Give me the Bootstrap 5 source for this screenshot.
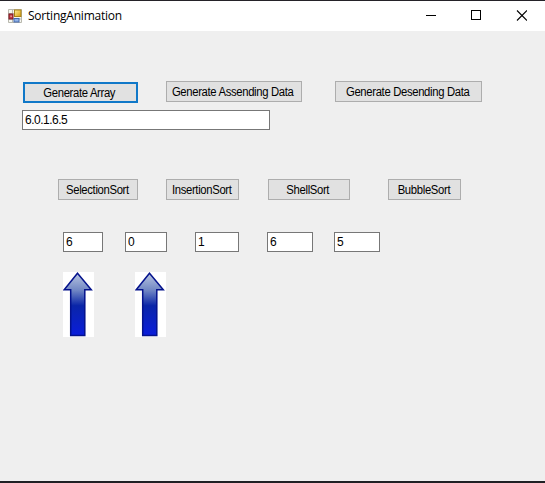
<!DOCTYPE html>
<html lang="en">
<head>
<meta charset="utf-8">
<title>SortingAnimation</title>
<link href="https://cdn.jsdelivr.net/npm/bootstrap@5.3.0/dist/css/bootstrap.min.css" rel="stylesheet">
<style>
body{font-family:"Liberation Sans",Arial,sans-serif;background:#efefef;color:#000}
.window{height:483px;border-top:1px solid #242228;border-bottom:2px solid #202024;background:#efefef}
.titlebar{height:30px;background:#fff;padding-left:8px}
.caption{font:12px/16px "Open Sans","Noto Sans",sans-serif;margin-left:6px;letter-spacing:-.22px}
.controls{padding-right:18px}
.form-btn{--bs-btn-padding-x:0;--bs-btn-padding-y:0;--bs-btn-border-radius:0;--bs-btn-color:#000;--bs-btn-bg:#e1e1e1;--bs-btn-border-color:#adadad;--bs-btn-hover-bg:#e5f1fb;--bs-btn-hover-border-color:#0078d7;font-size:12px;line-height:20px;height:21px;white-space:nowrap}
.form-btn span{display:inline-block;transform:translateX(-1px) scaleX(.94);margin:0 -8px;letter-spacing:-.35px}
.form-btn.focused{border:2px solid #1078c8;line-height:18px;margin-top:1px}
.field{height:20px;min-height:0;padding:0 2px;border:1px solid #777;border-radius:0;background:#fff;color:#000;font-size:12px;line-height:18px;letter-spacing:-.5px}
.generators{padding:50px 0 0 23px}
.b115{width:115px}.b136{width:136px;margin-left:28px}.b147{width:147px;margin-left:33px}
.array-field{width:248px;margin:7px 0 0 22px}
.sorts{padding:49px 0 0 58px}
.w80{width:80px}.w73{width:73px;margin-left:28px}.w82{width:82px;margin-left:29px}.w73b{width:73px;margin-left:38px}
.cells{padding:32px 0 0 63px}
.c1{width:40px}.c2{width:42px;margin-left:22px}.c3{width:44px;margin-left:28px}.c4{width:46px;margin-left:28px}.c5{width:46px;margin-left:21px}
.arrows{padding:20px 0 0 63px;gap:41px}
</style>
<script src="https://cdn.jsdelivr.net/npm/bootstrap@5.3.0/dist/js/bootstrap.bundle.min.js"></script>
</head>
<body class="overflow-hidden">
<div class="window">
  <header class="titlebar d-flex align-items-center">
    <svg width="14" height="14" viewBox="0 0 14 14">
      <defs><linearGradient id="gold" x2="1" y2="1"><stop stop-color="#fff09a"/><stop offset="1" stop-color="#d69a08"/></linearGradient></defs>
      <path d="M.5.5h13v13H.5zM.5 4.500h5M4.500.5v13M.5 10h13" fill="#f5f5f0" stroke="#b9b9ae"/>
      <rect x="1" y="5" width="4" height="5" fill="#c43c44" stroke="#7c1723"/><rect x="2.500" y="6.500" width="1.200" height="1.500" fill="#f4b5b5"/>
      <rect x="6.500" y="1" width="6.500" height="6.500" fill="url(#gold)" stroke="#a98216"/>
      <rect x="6" y="9.500" width="5" height="3.500" fill="#8eb0e6" stroke="#4469ad"/>
    </svg>
    <span class="caption">SortingAnimation</span>
    <div class="controls d-flex align-items-center ms-auto">
      <svg width="101" height="12" viewBox="0 0 101 12" fill="none" stroke="#000">
        <path d="M0 5.500h10M45.500 .5h9v9h-9z" shape-rendering="crispEdges"/><path d="M91 .5l10 10M101 .5L91 10.500" stroke-width="1.100"/>
      </svg>
    </div>
  </header>
  <main>
    <div class="generators d-flex">
      <button class="btn form-btn focused b115"><span>Generate Array</span></button>
      <button class="btn form-btn b136"><span>Generate Assending Data</span></button>
      <button class="btn form-btn b147"><span>Generate Desending Data</span></button>
    </div>
    <input class="form-control field array-field" value="6.0.1.6.5" aria-label="Array">
    <div class="sorts d-flex">
      <button class="btn form-btn w80"><span>SelectionSort</span></button>
      <button class="btn form-btn w73"><span>InsertionSort</span></button>
      <button class="btn form-btn w82"><span>ShellSort</span></button>
      <button class="btn form-btn w73b"><span>BubbleSort</span></button>
    </div>
    <div class="cells d-flex">
      <input class="form-control field c1" value="6" aria-label="Item 1">
      <input class="form-control field c2" value="0" aria-label="Item 2">
      <input class="form-control field c3" value="1" aria-label="Item 3">
      <input class="form-control field c4" value="6" aria-label="Item 4">
      <input class="form-control field c5" value="5" aria-label="Item 5">
    </div>
    <div class="arrows d-flex">
      <svg width="31" height="65" viewBox="0 0 31 65">
        <defs><linearGradient id="blue" x2="0" y2="1"><stop stop-color="#b8c4e0"/><stop offset=".27" stop-color="#7288c4"/><stop offset=".52" stop-color="#0a25a8"/><stop offset="1" stop-color="#0a1ddb"/></linearGradient></defs>
        <rect width="31" height="65" fill="#fff"/>
        <path d="M14.500 1.300L28.300 17.700H21.800V63.500H7.700V17.700H1.200z" fill="url(#blue)" stroke="#04128c" stroke-width="1.500"/>
      </svg>
      <svg width="31" height="65" viewBox="0 0 31 65">
        <rect width="31" height="65" fill="#fff"/>
        <path d="M14.500 1.300L28.300 17.700H21.800V63.500H7.700V17.700H1.200z" fill="url(#blue)" stroke="#04128c" stroke-width="1.500"/>
      </svg>
    </div>
  </main>
</div>
</body>
</html>
